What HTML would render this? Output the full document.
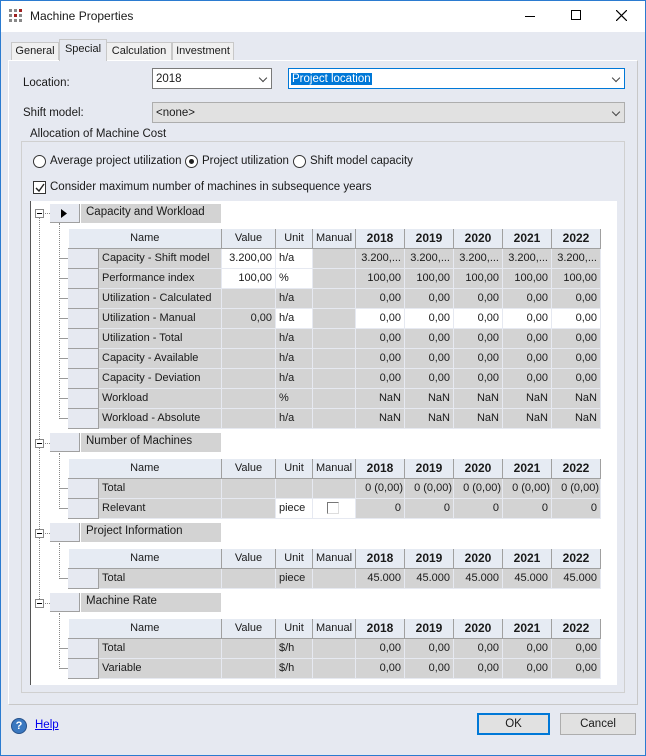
<!DOCTYPE html>
<html><head><meta charset="utf-8"><style>
*{box-sizing:border-box;margin:0;padding:0}
body{width:646px;height:756px;background:#e6e9f1;font-family:"Liberation Sans",sans-serif;font-size:11.5px;color:#1a1a1a;position:relative;overflow:hidden}
.a{position:absolute;white-space:nowrap}
.win{left:0;top:0;width:646px;height:756px;border:1px solid #2b7bd0}
.title{left:1px;top:1px;width:644px;height:31px;background:#fff}
.tab{top:42px;height:18px;border:1px solid #c8c8c8;border-bottom:none;background:#f0f0f0;text-align:center;line-height:17px;font-size:11px}
.page{left:8px;top:60px;width:630px;height:645px;border:1px solid #fff;border-right-color:#c8c8c8;border-bottom-color:#c8c8c8}
.combo{height:21px;border:1px solid #7a7a7a;background:#fff;line-height:19px;padding-left:3px}
.chev{position:absolute;right:5px;top:6px;width:6px;height:6px;border-right:1px solid #444;border-bottom:1px solid #444;transform:rotate(45deg)}
.grid{left:30px;top:201px;width:587px;height:484px;background:#fff;border-left:1px solid #555}
table{position:absolute;left:68px;width:532px;border-collapse:collapse;table-layout:fixed;font-size:11px}
td{height:20px;padding:0 3px;border:1px solid #e6e9f1;background:#d3d3d3;white-space:nowrap;overflow:hidden}
td.s{background:#e6e9f1;border-right:1px solid #a0a0a0;border-bottom:1px solid #a0a0a0}
td.w{background:#fff}
td.r{text-align:right}
tr.h td{background:#e6ebf3;border:none;border-right:1px solid #a0a0a0;border-bottom:1px solid #a0a0a0;text-align:center;height:19px}
tr.h td.b{font-weight:bold;font-size:12px}
.sec{left:50px;width:171px;height:19px}
.sec .sel{position:absolute;left:0;top:0;width:30px;height:19px;background:#e6e9f1;border-right:1px solid #a0a0a0;border-bottom:1px solid #a0a0a0}
.sec .lab{position:absolute;left:31px;top:0;width:140px;height:19px;background:#d3d3d3;padding-left:5px;line-height:17px;font-size:11.5px}
.vd{border-left:1px dotted #888;width:1px}
.hd{border-top:1px dotted #888;height:1px}
.minus{width:9px;height:9px;border:1px solid #888;background:#fff}
.minus:after{content:"";position:absolute;left:1px;top:3px;width:5px;height:1px;background:#000}
.radio{width:13px;height:13px;border:1px solid #333;border-radius:50%;background:#fff}
.btn{height:22px;border:1px solid #adadad;background:#e1e1e1;text-align:center;line-height:20px}
.rl{left:60px;width:8px;background:repeating-linear-gradient(to bottom,#999 0,#999 1px,transparent 1px,transparent 20px)}
</style></head><body>
<div class="a win"></div>
<div class="a title"></div>
<svg class="a" style="left:9px;top:9px" width="14" height="14"><g fill="#888"><rect x="0" y="0" width="3" height="3"/><rect x="5" y="0" width="3" height="3"/><rect x="10" y="0" width="3" height="3" fill="#a02020"/><rect x="0" y="5" width="3" height="3"/><rect x="5" y="5" width="3" height="3" fill="#a02020"/><rect x="10" y="5" width="3" height="3"/><rect x="0" y="10" width="3" height="3"/><rect x="5" y="10" width="3" height="3"/><rect x="10" y="10" width="3" height="3"/></g></svg>
<div class="a" style="left:30px;top:9px;font-size:12px">Machine Properties</div>
<div class="a" style="left:525px;top:16px;width:10px;height:1px;background:#000"></div>
<div class="a" style="left:571px;top:10px;width:10px;height:10px;border:1px solid #000"></div>
<svg class="a" style="left:616px;top:10px" width="11" height="11"><path d="M0 0L11 11M11 0L0 11" stroke="#000" stroke-width="1.2"/></svg>

<div class="a page"></div>
<div class="a tab" style="left:11px;width:48px">General</div>
<div class="a tab" style="left:106px;width:66px">Calculation</div>
<div class="a tab" style="left:172px;width:62px">Investment</div>
<div class="a tab" style="left:59px;top:39px;width:48px;height:22px;background:#e6e9f1;border-color:#c8c8c8;line-height:19px">Special</div>

<div class="a" style="left:23px;top:77px">Location:</div>
<div class="a combo" style="left:152px;top:68px;width:120px;line-height:20px">2018<div class="chev"></div></div>
<div class="a combo" style="left:288px;top:68px;width:337px;border-color:#0078d7;padding-left:2px;line-height:20px"><span style="background:#0078d7;color:#fff;padding:0 1px">Project location</span><div class="chev"></div></div>
<div class="a" style="left:23px;top:107px">Shift model:</div>
<div class="a combo" style="left:152px;top:102px;width:473px;background:#e1e1e1;border-color:#adadad;line-height:20px">&lt;none&gt;<div class="chev"></div></div>

<div class="a" style="left:21px;top:141px;width:604px;height:552px;border:1px solid #d0d0d0"></div>
<div class="a" style="left:28px;top:128px;background:#e6e9f1;padding:0 2px">Allocation of Machine Cost</div>
<div class="a radio" style="left:33px;top:155px"></div>
<div class="a" style="left:50px;top:155px">Average project utilization</div>
<div class="a radio" style="left:185px;top:155px"><div class="a" style="left:3px;top:3px;width:5px;height:5px;border-radius:50%;background:#222"></div></div>
<div class="a" style="left:202px;top:155px">Project utilization</div>
<div class="a radio" style="left:293px;top:155px"></div>
<div class="a" style="left:310px;top:155px">Shift model capacity</div>
<div class="a" style="left:33px;top:181px;width:13px;height:13px;border:1px solid #333;background:#fff"><svg class="a" style="left:1px;top:1px" width="10" height="10"><path d="M1 5L4 8L9 1" stroke="#222" stroke-width="1.4" fill="none"/></svg></div>
<div class="a" style="left:50px;top:181px">Consider maximum number of machines in subsequence years</div>

<div class="a grid"></div>
<div class="a vd" style="left:39px;top:217px;height:388px"></div>
<div class="a hd" style="left:40px;top:213px;width:10px"></div>
<div class="a hd" style="left:40px;top:443px;width:10px"></div>
<div class="a hd" style="left:40px;top:533px;width:10px"></div>
<div class="a hd" style="left:40px;top:603px;width:10px"></div>
<div class="a minus" style="left:35px;top:209px"></div>
<div class="a minus" style="left:35px;top:439px"></div>
<div class="a minus" style="left:35px;top:529px"></div>
<div class="a minus" style="left:35px;top:599px"></div>
<div class="a vd" style="left:59px;top:223px;height:196px"></div>
<div class="a vd" style="left:59px;top:453px;height:56px"></div>
<div class="a vd" style="left:59px;top:543px;height:36px"></div>
<div class="a vd" style="left:59px;top:613px;height:56px"></div>
<div class="a rl" style="top:258px;height:161px"></div>
<div class="a rl" style="top:488px;height:21px"></div>
<div class="a rl" style="top:578px;height:1px"></div>
<div class="a rl" style="top:648px;height:21px"></div>

<div class="a sec" style="top:204px"><div class="sel"><svg class="a" style="left:11px;top:5px" width="6" height="9"><path d="M0 0L6 4.5L0 9Z" fill="#000"/></svg></div><div class="lab">Capacity and Workload</div></div>
<div class="a sec" style="top:433px"><div class="sel"></div><div class="lab">Number of Machines</div></div>
<div class="a sec" style="top:523px"><div class="sel"></div><div class="lab">Project Information</div></div>
<div class="a sec" style="top:593px"><div class="sel"></div><div class="lab">Machine Rate</div></div>

<table style="top:229px">
<colgroup><col style="width:30px"><col style="width:123px"><col style="width:54px"><col style="width:37px"><col style="width:43px"><col style="width:49px"><col style="width:49px"><col style="width:49px"><col style="width:49px"><col style="width:49px"></colgroup>
<tr class="h"><td colspan="2">Name</td><td>Value</td><td>Unit</td><td>Manual</td><td class="b">2018</td><td class="b">2019</td><td class="b">2020</td><td class="b">2021</td><td class="b">2022</td></tr>
<tr><td class="s"></td><td>Capacity - Shift model</td><td class="w r">3.200,00</td><td class="w">h/a</td><td></td><td class="r">3.200,...</td><td class="r">3.200,...</td><td class="r">3.200,...</td><td class="r">3.200,...</td><td class="r">3.200,...</td></tr>
<tr><td class="s"></td><td>Performance index</td><td class="w r">100,00</td><td class="w">%</td><td></td><td class="r">100,00</td><td class="r">100,00</td><td class="r">100,00</td><td class="r">100,00</td><td class="r">100,00</td></tr>
<tr><td class="s"></td><td>Utilization - Calculated</td><td></td><td>h/a</td><td></td><td class="r">0,00</td><td class="r">0,00</td><td class="r">0,00</td><td class="r">0,00</td><td class="r">0,00</td></tr>
<tr><td class="s"></td><td>Utilization - Manual</td><td class="r">0,00</td><td class="w">h/a</td><td></td><td class="w r">0,00</td><td class="w r">0,00</td><td class="w r">0,00</td><td class="w r">0,00</td><td class="w r">0,00</td></tr>
<tr><td class="s"></td><td>Utilization - Total</td><td></td><td>h/a</td><td></td><td class="r">0,00</td><td class="r">0,00</td><td class="r">0,00</td><td class="r">0,00</td><td class="r">0,00</td></tr>
<tr><td class="s"></td><td>Capacity - Available</td><td></td><td>h/a</td><td></td><td class="r">0,00</td><td class="r">0,00</td><td class="r">0,00</td><td class="r">0,00</td><td class="r">0,00</td></tr>
<tr><td class="s"></td><td>Capacity - Deviation</td><td></td><td>h/a</td><td></td><td class="r">0,00</td><td class="r">0,00</td><td class="r">0,00</td><td class="r">0,00</td><td class="r">0,00</td></tr>
<tr><td class="s"></td><td>Workload</td><td></td><td>%</td><td></td><td class="r">NaN</td><td class="r">NaN</td><td class="r">NaN</td><td class="r">NaN</td><td class="r">NaN</td></tr>
<tr><td class="s"></td><td>Workload - Absolute</td><td></td><td>h/a</td><td></td><td class="r">NaN</td><td class="r">NaN</td><td class="r">NaN</td><td class="r">NaN</td><td class="r">NaN</td></tr>
</table>

<table style="top:459px">
<colgroup><col style="width:30px"><col style="width:123px"><col style="width:54px"><col style="width:37px"><col style="width:43px"><col style="width:49px"><col style="width:49px"><col style="width:49px"><col style="width:49px"><col style="width:49px"></colgroup>
<tr class="h"><td colspan="2">Name</td><td>Value</td><td>Unit</td><td>Manual</td><td class="b">2018</td><td class="b">2019</td><td class="b">2020</td><td class="b">2021</td><td class="b">2022</td></tr>
<tr><td class="s"></td><td>Total</td><td></td><td></td><td></td><td class="r" style="padding:0 1px">0 (0,00)</td><td class="r" style="padding:0 1px">0 (0,00)</td><td class="r" style="padding:0 1px">0 (0,00)</td><td class="r" style="padding:0 1px">0 (0,00)</td><td class="r" style="padding:0 1px">0 (0,00)</td></tr>
<tr><td class="s"></td><td>Relevant</td><td></td><td class="w">piece</td><td class="w"><div style="width:12px;height:12px;border:1px solid #777;margin-left:11px;border-right-color:#ddd;border-bottom-color:#ddd"></div></td><td class="r">0</td><td class="r">0</td><td class="r">0</td><td class="r">0</td><td class="r">0</td></tr>
</table>

<table style="top:549px">
<colgroup><col style="width:30px"><col style="width:123px"><col style="width:54px"><col style="width:37px"><col style="width:43px"><col style="width:49px"><col style="width:49px"><col style="width:49px"><col style="width:49px"><col style="width:49px"></colgroup>
<tr class="h"><td colspan="2">Name</td><td>Value</td><td>Unit</td><td>Manual</td><td class="b">2018</td><td class="b">2019</td><td class="b">2020</td><td class="b">2021</td><td class="b">2022</td></tr>
<tr><td class="s"></td><td>Total</td><td></td><td>piece</td><td></td><td class="r">45.000</td><td class="r">45.000</td><td class="r">45.000</td><td class="r">45.000</td><td class="r">45.000</td></tr>
</table>

<table style="top:619px">
<colgroup><col style="width:30px"><col style="width:123px"><col style="width:54px"><col style="width:37px"><col style="width:43px"><col style="width:49px"><col style="width:49px"><col style="width:49px"><col style="width:49px"><col style="width:49px"></colgroup>
<tr class="h"><td colspan="2">Name</td><td>Value</td><td>Unit</td><td>Manual</td><td class="b">2018</td><td class="b">2019</td><td class="b">2020</td><td class="b">2021</td><td class="b">2022</td></tr>
<tr><td class="s"></td><td>Total</td><td></td><td>$/h</td><td></td><td class="r">0,00</td><td class="r">0,00</td><td class="r">0,00</td><td class="r">0,00</td><td class="r">0,00</td></tr>
<tr><td class="s"></td><td>Variable</td><td></td><td>$/h</td><td></td><td class="r">0,00</td><td class="r">0,00</td><td class="r">0,00</td><td class="r">0,00</td><td class="r">0,00</td></tr>
</table>

<div class="a" style="left:11px;top:718px;width:16px;height:16px;border-radius:50%;background:#3a78c0;border:1px solid #26518a;color:#fff;font-weight:bold;font-size:11px;text-align:center;line-height:14px">?</div>
<div class="a" style="left:35px;top:719px;color:#0000ee;text-decoration:underline">Help</div>
<div class="a btn" style="left:477px;top:713px;width:73px;border:2px solid #0078d7;line-height:18px">OK</div>
<div class="a btn" style="left:560px;top:713px;width:76px">Cancel</div>
</body></html>
